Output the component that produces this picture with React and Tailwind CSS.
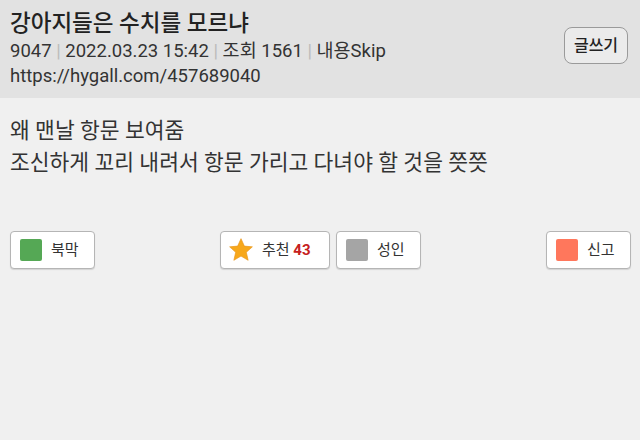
const font = { fontFamily: "Roboto, 'Noto Sans CJK KR', sans-serif" }

function Btn({ children, className = '' }) {
  return (
    <button
      className={`flex items-center h-[38px] rounded-[4px] border border-[#b5b5b5] bg-white text-[15px] text-[#333] shadow-[0_1px_1px_rgba(0,0,0,0.12)] ${className}`}
    >
      {children}
    </button>
  )
}

function Square({ color }) {
  return <span className={`w-[22px] h-[22px] rounded-[2px] ${color}`} />
}

function Star() {
  return (
    <svg width="26" height="26" viewBox="0 0 24 24">
      <path
        d="M12 1.5l3.1 6.9 7.4.7-5.6 5 1.7 7.4L12 17.6 5.4 21.5l1.7-7.4-5.6-5 7.4-.7z"
        fill="#f7a81b"
        stroke="#e8941a"
        strokeWidth="0.6"
        strokeLinejoin="round"
      />
    </svg>
  )
}

export default function App() {
  return (
    <div className="w-[640px] h-[440px] bg-[#f0f0f0] text-[#2b2b2b]" style={font}>
      <div className="flex justify-between items-start bg-[#e2e2e2] h-[98px] pl-[10px] pr-[12px]">
        <div className="pt-[9px]">
          <h1 className="text-[22.5px] leading-[29px] font-medium text-[#222]">강아지들은 수치를 모르냐</h1>
          <p className="text-[18.5px] leading-[25px] mt-[1px] text-[#333]">
            9047 <span className="text-[#bbb]">|</span> 2022.03.23 15:42 <span className="text-[#bbb]">|</span> 조회 1561{' '}
            <span className="text-[#bbb]">|</span> 내용Skip
          </p>
          <p className="text-[18.5px] leading-[25px] text-[#333]">https://hygall.com/457689040</p>
        </div>
        <button className="mt-[27px] w-[64px] h-[37px] rounded-[8px] border border-[#9a9a9a] bg-[#ebebeb] text-[16px] font-medium text-[#222]">
          글쓰기
        </button>
      </div>

      <div className="px-[10px] pt-[17px] text-[21.5px] leading-[32px] text-[#333]">
        <p>왜 맨날 항문 보여줌</p>
        <p>조신하게 꼬리 내려서 항문 가리고 다녀야 할 것을 쯧쯧</p>
      </div>

      <div className="flex justify-between items-center px-[10px] pr-[9px] mt-[52px]">
        <Btn className="w-[85px] pl-[9px] gap-[9px]">
          <Square color="bg-[#55a855]" />
          북막
        </Btn>
        <div className="flex gap-[6px]">
          <Btn className="w-[110px] pl-[7px] gap-[8px]">
            <Star />
            <span>
              추천 <b className="text-[#c62020]">43</b>
            </span>
          </Btn>
          <Btn className="w-[85px] pl-[9px] gap-[9px]">
            <Square color="bg-[#a5a5a5]" />
            성인
          </Btn>
        </div>
        <Btn className="w-[85px] pl-[9px] gap-[9px]">
          <Square color="bg-[#ff775c]" />
          신고
        </Btn>
      </div>
    </div>
  )
}
